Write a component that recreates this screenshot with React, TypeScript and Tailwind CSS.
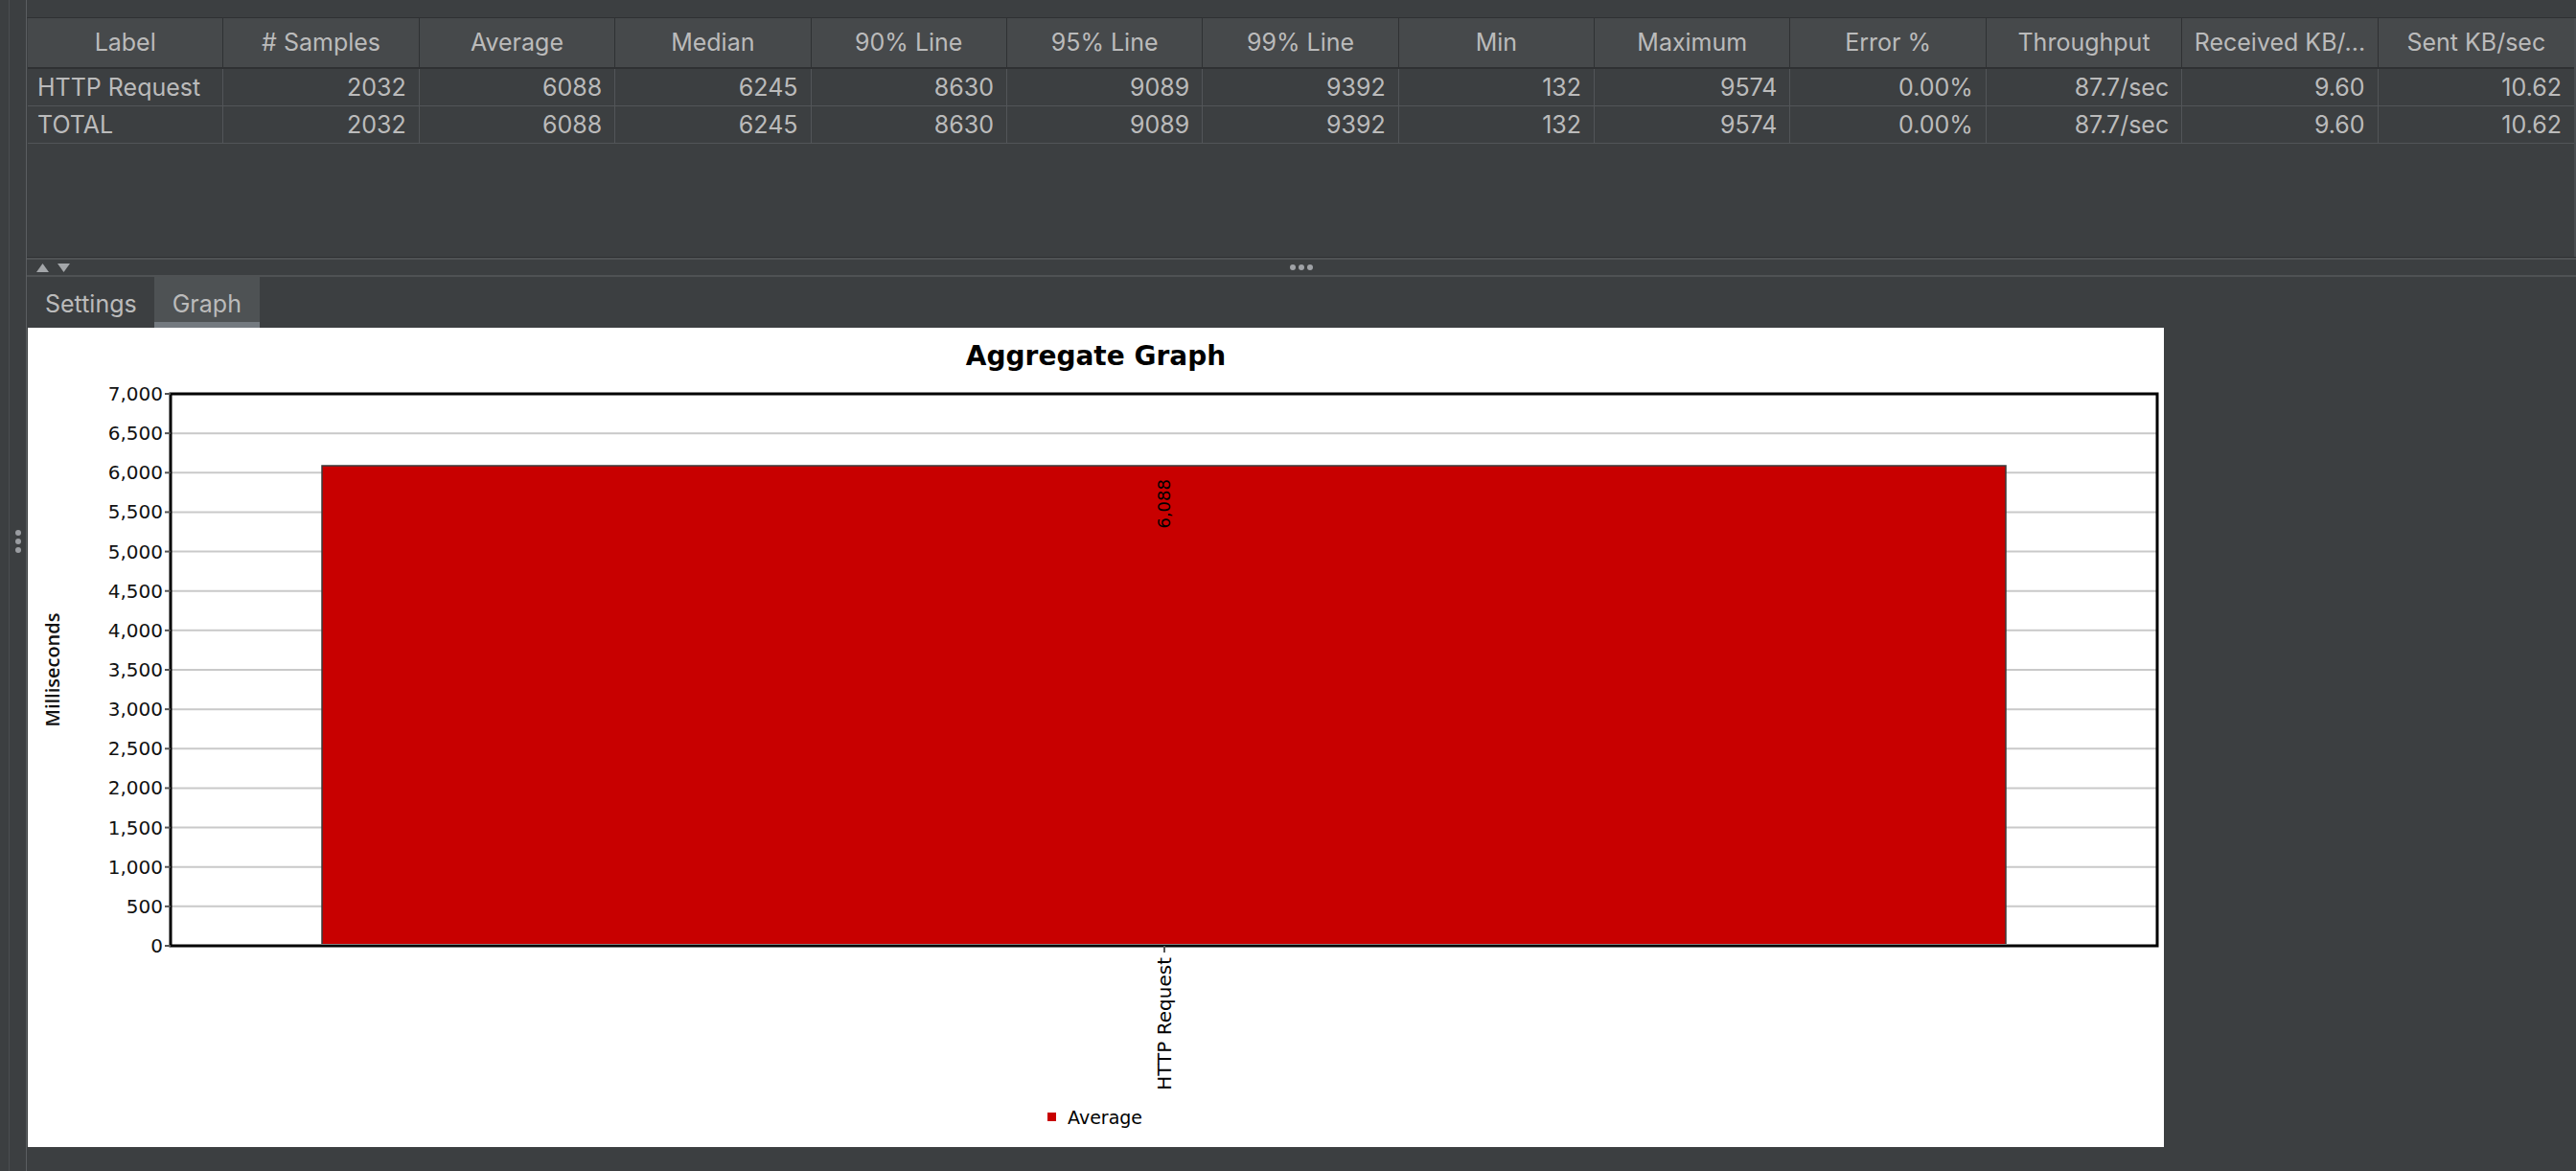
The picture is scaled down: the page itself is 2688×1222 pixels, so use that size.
import React from "react";

const headers = [
  "Label",
  "# Samples",
  "Average",
  "Median",
  "90% Line",
  "95% Line",
  "99% Line",
  "Min",
  "Maximum",
  "Error %",
  "Throughput",
  "Received KB/...",
  "Sent KB/sec",
];

const vals = ["2032", "6088", "6245", "8630", "9089", "9392", "132", "9574", "0.00%", "87.7/sec", "9.60", "10.62"];
const rows = [
  ["HTTP Request", ...vals],
  ["TOTAL", ...vals],
];

const PLOT_L = 149;
const PLOT_R = 2222;
const PLOT_T = 69;
const PLOT_B = 645;
const yOf = (v: number) => PLOT_B - (v / 7000) * (PLOT_B - PLOT_T);
const ticks = Array.from({ length: 15 }, (_, i) => i * 500);
const fmt = (v: number) => v.toLocaleString("en-US");

function Chart() {
  const barTop = yOf(6088);
  const font = "'DejaVu Sans', 'Liberation Sans', sans-serif";
  return (
    <svg width="2229" height="855" viewBox="0 0 2229 855" className="block">
      <text x="1114.5" y="39" textAnchor="middle" fontFamily={font} fontWeight="bold" fontSize="28" fill="#000">
        Aggregate Graph
      </text>
      {ticks.slice(1, 14).map((v) => (
        <line key={"g" + v} x1={PLOT_L} x2={PLOT_R} y1={yOf(v)} y2={yOf(v)} stroke="#c9c9c9" strokeWidth="2" />
      ))}
      <rect x="307" y={barTop} width="1757" height={PLOT_B - 2 - barTop} fill="#c80000" />
      <polyline
        points={`307,${PLOT_B - 2} 307,${barTop} 2064,${barTop} 2064,${PLOT_B - 2}`}
        fill="none"
        stroke="#3a3a3a"
        strokeWidth="1.5"
      />
      <rect x={PLOT_L} y={PLOT_T} width={PLOT_R - PLOT_L} height={PLOT_B - PLOT_T} fill="none" stroke="#000" strokeWidth="3" />
      {ticks.map((v) => (
        <g key={"t" + v}>
          <line x1="143" x2={PLOT_L} y1={yOf(v)} y2={yOf(v)} stroke="#555" strokeWidth="2" />
          <text x="141" y={yOf(v) + 7} textAnchor="end" fontFamily={font} fontSize="20" fill="#111">
            {fmt(v)}
          </text>
        </g>
      ))}
      <text
        transform="translate(33,357) rotate(-90)"
        textAnchor="middle"
        fontFamily="'Open Sans', 'DejaVu Sans', sans-serif"
        fontWeight="600"
        fontSize="20"
        fill="#111"
      >
        Milliseconds
      </text>
      <text transform={`translate(1192,${barTop + 14}) rotate(-90)`} textAnchor="end" fontFamily={font} fontSize="18" fill="#000">
        6,088
      </text>
      <line x1="1186" x2="1186" y1={PLOT_B} y2={PLOT_B + 7} stroke="#555" strokeWidth="2" />
      <text transform="translate(1193,657) rotate(-90)" textAnchor="end" fontFamily={font} fontSize="20" fill="#000">
        HTTP Request
      </text>
      <rect x="1064" y="819" width="9" height="9" fill="#c80000" />
      <text x="1085" y="831" fontFamily={font} fontSize="19" fill="#000">
        Average
      </text>
    </svg>
  );
}

function Tri({ up }: { up: boolean }) {
  return (
    <svg width="13" height="9" viewBox="0 0 13 9" className="block">
      <polygon points={up ? "6.5,0 13,9 0,9" : "0,0 13,0 6.5,9"} fill="#a3a6a9" />
    </svg>
  );
}

export default function App() {
  return (
    <div className="flex h-[1222px] w-[2688px] overflow-hidden bg-[#3c3f41] font-['Inter',sans-serif] text-[#bbbbbb]">
      {/* left strip */}
      <div className="flex h-full w-[28px] flex-none">
        <div className="w-[9px]" />
        <div className="w-px bg-[#4b4e51]" />
        <div className="flex flex-1 flex-col items-center gap-[3px] pt-[553px]">
          <div className="size-[6px] rounded-full bg-[#9a9da1]" />
          <div className="size-[6px] rounded-full bg-[#9a9da1]" />
          <div className="size-[6px] rounded-full bg-[#9a9da1]" />
        </div>
        <div className="w-px bg-[#5b5e61]" />
      </div>

      {/* main column */}
      <div className="flex min-w-0 flex-1 flex-col">
        <div className="h-[19px] flex-none border-b border-[#2f3133]" />

        {/* table pane */}
        <div className="h-[250px] flex-none border-b border-[#2f3133]">
          <div className="ml-px h-full border-r-2 border-[#4a4d50]">
            <div className="grid h-[53px] grid-cols-[repeat(13,minmax(0,1fr))] border-b-2 border-[#2f3133] bg-[#46494b]">
              {headers.map((h, i) => (
                <div
                  key={h}
                  className={`flex items-center justify-center whitespace-nowrap text-[25px] leading-none ${
                    i < 12 ? "border-r border-[#2f3133]" : ""
                  }`}
                >
                  {h}
                </div>
              ))}
            </div>
            {rows.map((r, ri) => (
              <div key={ri} className="grid h-[39px] grid-cols-[repeat(13,minmax(0,1fr))] border-b border-[#525558]">
                {r.map((c, ci) => (
                  <div
                    key={ci}
                    className={`flex items-center whitespace-nowrap text-[25px] leading-none ${
                      ci === 0 ? "justify-start pl-[10px]" : "justify-end pr-[13px]"
                    } ${ci < 12 ? "border-r border-[#525558]" : ""}`}
                  >
                    {c}
                  </div>
                ))}
              </div>
            ))}
          </div>
        </div>

        {/* splitter */}
        <div className="relative flex h-[20px] flex-none items-center border-y-2 border-[#4f5254]">
          <div className="flex items-center gap-[9px] pl-[10px]">
            <Tri up />
            <Tri up={false} />
          </div>
          <div className="absolute inset-0 flex items-center justify-center gap-[3px]">
            <div className="size-[6px] rounded-full bg-[#9fa2a6]" />
            <div className="size-[6px] rounded-full bg-[#9fa2a6]" />
            <div className="size-[6px] rounded-full bg-[#9fa2a6]" />
          </div>
        </div>

        {/* tab bar */}
        <div className="flex h-[53px] flex-none items-stretch pl-px">
          <div className="flex items-center px-[18px] pt-[4px] text-[25px] leading-none">Settings</div>
          <div className="flex items-center bg-[#4e5254] px-[19px] pt-[4px] text-[25px] leading-none shadow-[inset_0_-6px_0_#747a80]">
            Graph
          </div>
        </div>

        {/* chart panel */}
        <div className="flex h-[855px] flex-none">
          <div className="ml-px w-[2229px] flex-none bg-white">
            <Chart />
          </div>
          <div className="flex-1" />
        </div>
      </div>
    </div>
  );
}
